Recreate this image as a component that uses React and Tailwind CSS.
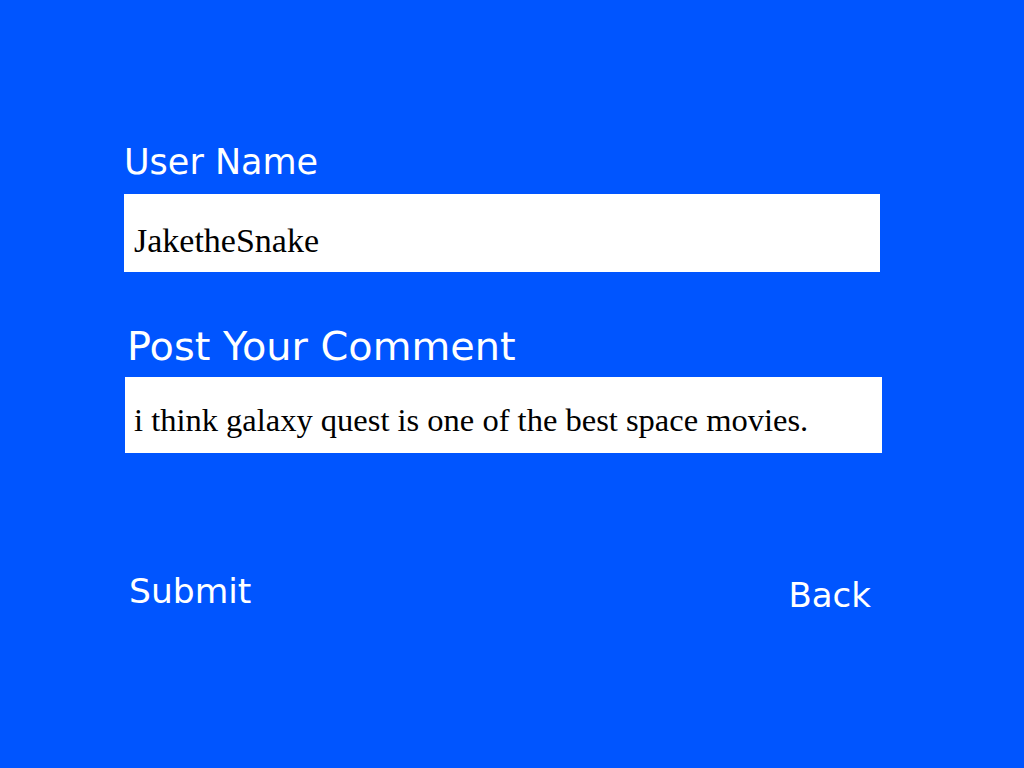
import React from 'react';

const App = () => {
  return (
    <div className="min-h-screen w-full bg-[#0055ff] font-['DejaVu_Sans',sans-serif] text-white">
      <div className="flex w-[758px] flex-col pl-[124px] pt-[142px] box-content">
        <label className="block h-[40px] text-[35px] leading-[40px]">User Name</label>
        <div className="mt-[12px] h-[78px] w-[756px] bg-white pl-[10px] pt-[30px]">
          <span className="block font-['Liberation_Serif',serif] text-[34px] leading-[33px] text-black">
            JaketheSnake
          </span>
        </div>

        <label className="ml-[3px] mt-[52px] block h-[45px] text-[39.8px] leading-[45px]">Post Your Comment</label>
        <div className="ml-[1px] mt-[8px] h-[76px] w-[757px] bg-white pl-[9px] pt-[27px]">
          <span className="block font-['Liberation_Serif',serif] text-[32.5px] leading-[33px] text-black">
            i think galaxy quest is one of the best space movies.
          </span>
        </div>

        <div className="mt-[118px] flex w-[756px] items-start justify-between">
          <button className="ml-[5px] h-[40px] text-[34.5px] leading-[40px] text-white">Submit</button>
          <button className="mr-[9px] mt-[4px] h-[40px] text-[34px] leading-[40px] text-white">Back</button>
        </div>
      </div>
    </div>
  );
};

export default App;
